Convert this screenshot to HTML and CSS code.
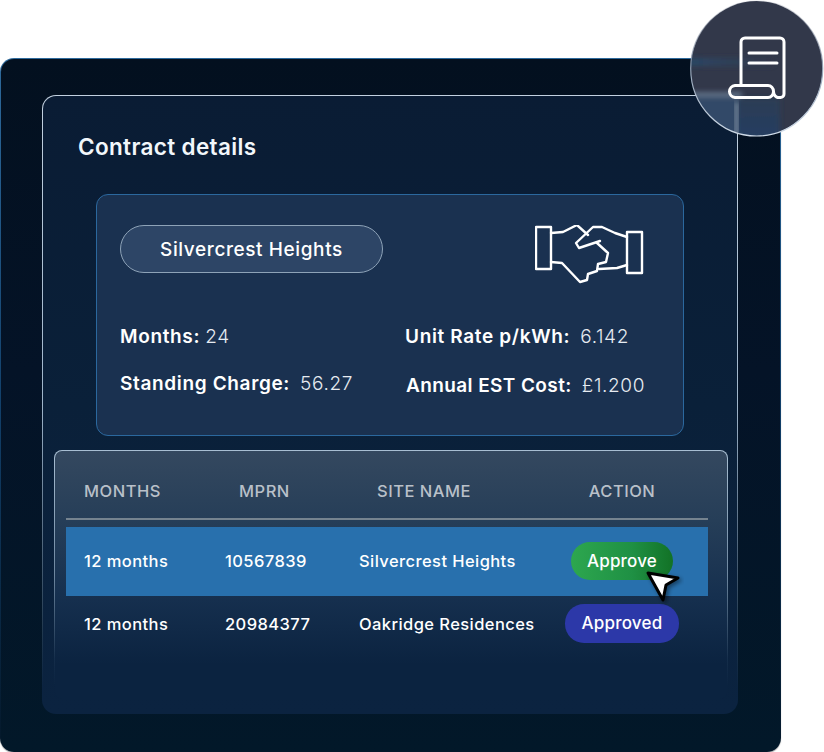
FILE: index.html
```html
<!DOCTYPE html>
<html lang="en">
<head>
<meta charset="utf-8">
<title>Contract details</title>
<link rel="stylesheet" href="styles.css">
</head>
<body>
<main class="shell">
  <section class="panel">
    <h1 class="title">Contract details</h1>
    <div class="summary">
      <div class="summary-top">
        <div class="site-pill">Silvercrest Heights</div>
        <svg class="handshake" viewBox="0 0 110 60" width="110" height="60" fill="none" stroke="#fff" stroke-width="2.4" stroke-linejoin="round" stroke-linecap="round">
          <rect x="1" y="2" width="15" height="42"/>
          <rect x="92" y="7" width="15" height="41"/>
          <path d="M16 8 L28 7 L42 0 L53 10"/>
          <path d="M92 12 L80 8 L67 2 L58 2 L41 18 L44 23 L65 16"/>
          <path d="M62 18 L73 28 L71 37 L63 39 L62 46 L53 49 L52 55 L45 57 L27 38 L16 37"/>
          <path d="M64 44 L82 43 L92 40"/>
        </svg>
      </div>
      <div class="facts">
        <p class="fact"><b>Months:</b> <span>24</span></p>
        <p class="fact fact-right"><b>Unit Rate p/kWh:</b> <span>6.142</span></p>
        <p class="fact fact-raised"><b>Standing Charge:</b> <span>56.27</span></p>
        <p class="fact fact-right fact-annual"><b>Annual EST Cost:</b> <span>£1.200</span></p>
      </div>
    </div>
    <div class="table-card">
      <div class="row head">
        <div>MONTHS</div>
        <div class="head-mprn">MPRN</div>
        <div class="head-site">SITE NAME</div>
        <div class="cell-action">ACTION</div>
      </div>
      <div class="row data selected">
        <div>12 months</div>
        <div>10567839</div>
        <div>Silvercrest Heights</div>
        <div class="cell-action"><span class="btn btn-approve">Approve</span></div>
      </div>
      <div class="row data">
        <div>12 months</div>
        <div>20984377</div>
        <div>Oakridge Residences</div>
        <div class="cell-action"><span class="btn btn-approved">Approved</span></div>
      </div>
    </div>
  </section>
  <svg class="cursor" viewBox="0 0 40 36" width="40" height="36">
    <defs><filter id="cs" x="-30%" y="-30%" width="160%" height="160%"><feDropShadow dx="2" dy="2" stdDeviation="2" flood-color="#000" flood-opacity=".45"/></filter></defs>
    <path d="M4 3 L34 8 L22 15 L19 30 Z" fill="#fff" stroke="#000" stroke-width="3" stroke-linejoin="round" filter="url(#cs)"/>
  </svg>
  <svg class="badge" viewBox="0 0 134 138" width="134" height="138" fill="none">
    <defs>
      <clipPath id="disc"><ellipse cx="66.700" cy="68.500" rx="66" ry="67.500"/></clipPath>
      <filter id="soft" x="-30%" y="-30%" width="160%" height="160%"><feGaussianBlur stdDeviation="2.5"/></filter>
      <linearGradient id="ring" x1="0" y1="0" x2="0" y2="1">
        <stop offset="0" stop-color="#6f7688" stop-opacity=".2"/>
        <stop offset=".55" stop-color="#9aa9bc"/>
        <stop offset="1" stop-color="#cfdbe8"/>
      </linearGradient>
      <linearGradient id="band" x1="0" y1="0" x2="1" y2="0">
        <stop offset="0" stop-color="#2b4867"/>
        <stop offset="1" stop-color="#32384a"/>
      </linearGradient>
      <linearGradient id="low" x1="0" y1="0" x2="0" y2="1">
        <stop offset="0" stop-color="#2b3c55"/>
        <stop offset="1" stop-color="#253f62"/>
      </linearGradient>
    </defs>
    <g clip-path="url(#disc)">
      <rect width="134" height="138" fill="#32384a"/>
      <g filter="url(#soft)">
        <rect x="-6" y="58" width="90" height="8" fill="url(#band)"/>
        <rect x="-6" y="96" width="54" height="46" fill="#304868"/>
        <rect x="48" y="98" width="42" height="44" fill="url(#low)"/>
        <rect x="-6" y="92" width="58" height="5" fill="#5f7086"/>
      </g>
      <rect x="45.500" y="102" width="2.500" height="36" fill="#a2afbd" filter="url(#soft)"/>
    </g>
    <ellipse cx="66.700" cy="68.500" rx="66" ry="67.500" stroke="url(#ring)" stroke-width="1.200"/>
    <g stroke="#fff" stroke-width="3" stroke-linecap="round" stroke-linejoin="round">
      <path d="M51 85 V42 a4 4 0 0 1 4-4 H90 a4 4 0 0 1 4 4 V94 a3.500 3.500 0 0 1-3.500 3.500 H88"/>
      <path d="M88.500 97.500 a5 6 0 0 1-5-6 a5.500 6 0 0 0-5.500-6 H45 a6 6 0 0 0-5.500 6 a6 6 0 0 0 5.500 6 H78 a5.500 6 0 0 0 5.500-6"/>
      <path d="M59 53 H87 M59 63 H87"/>
    </g>
  </svg>
</main>
</body>
</html>
```
FILE: styles.css
```css
* { box-sizing: border-box; }
html, body { margin: 0; padding: 0; background: #fff; }
body { width: 824px; height: 752px; overflow: hidden; font-family: Inter, "Liberation Sans", sans-serif; color: #fff; }
.shell {
  position: relative;
  width: 824px;
  height: 752px;
  padding: 58px 44px 0 0;
}
.shell > .panel { margin-left: 42px; }
.shell::before {
  content: "";
  position: absolute;
  left: 0;
  top: 58px;
  width: 779px;
  height: 692px;
  border-radius: 14px;
  border: 1px solid transparent;
  background:
    linear-gradient(180deg, #03101f 0%, #041327 45%, #021829 100%) padding-box,
    linear-gradient(180deg, #2e6a9c 0%, #12406a 50%, #04182a 100%) border-box;
  box-shadow: 0 1px 1px rgba(0, 0, 0, .35);
}
.panel {
  position: relative;
  width: 696px;
  height: 619px;
  margin-top: 37px;
  border: 1px solid transparent;
  border-radius: 14px;
  background:
    linear-gradient(180deg, #0a1c34 0%, #0a2039 50%, #0b2340 100%) padding-box,
    linear-gradient(180deg, #c3d1e0 0%, #9fb5ca 50%, rgba(110,140,170,.3) 86%, #0b2340 96%) border-box;
  display: flex;
  flex-direction: column;
  padding: 37px 0 0 0;
}
.title {
  margin: 0 0 0 35px;
  font-size: 22.5px;
  line-height: 28px;
  font-weight: 600;
  letter-spacing: .35px;
  color: #f2f7fb;
}
.summary {
  width: 588px;
  height: 242px;
  margin: 33px 0 0 53px;
  padding: 30px 40px 0 23px;
  border: 1px solid #2b689e;
  border-radius: 12px;
  background: #1a3150;
}
.summary-top {
  display: flex;
  justify-content: space-between;
  align-items: flex-start;
}
.site-pill {
  width: 263px;
  height: 48px;
  border-radius: 24px;
  border: 1px solid #8ea3b8;
  background: #2d4566;
  display: flex;
  align-items: center;
  justify-content: center;
  font-size: 19px;
  font-weight: 500;
  letter-spacing: .6px;
}
.handshake { margin-top: 0; margin-right: -2px; }
.facts {
  display: grid;
  grid-template-columns: 285px 1fr;
  grid-auto-rows: 49px;
  margin-top: 38px;
}
.fact {
  margin: 0;
  font-size: 19px;
  line-height: 28px;
  white-space: nowrap;
  display: flex;
  gap: 5px;
}
.fact b { font-weight: 600; letter-spacing: .65px; }
.fact span { font-weight: 300; color: #e6ebf1; letter-spacing: .65px; }
.fact-right { gap: 10px; }
.fact-raised { gap: 10px; margin-top: -2px; }
.fact-annual { padding-left: 1px; }
.fact-annual b { letter-spacing: .4px; }
.table-card {
  width: 674px;
  height: 250px;
  margin: 14px 0 0 11px;
  padding: 0 11px;
  border: 1px solid transparent;
  border-radius: 8px;
  background:
    linear-gradient(180deg, #34485f 0%, #263e58 28%, #16304f 58%, #0b2340 86%) padding-box,
    linear-gradient(180deg, #a8bed2 0%, #6e879f 50%, rgba(60,90,120,.2) 84%, rgba(11,35,64,0) 95%) border-box;
}
.row {
  display: grid;
  grid-template-columns: 141px 134px 177px 172px;
  padding-left: 18px;
  width: 642px;
  align-items: center;
}
.head {
  height: 69px;
  padding-top: 13px;
  border-bottom: 2px solid #75838f;
  font-size: 16.500px;
  font-weight: 500;
  color: #b9c0c9;
  letter-spacing: .5px;
}
.head-mprn { padding-left: 14px; }
.head-site { padding-left: 18px; }
.data {
  font-size: 16.500px;
  font-weight: 500;
  letter-spacing: .42px;
}
.selected { height: 69px; margin-top: 7px; padding-bottom: 1px; background: #2870ad; }
.selected + .data { height: 56px; }
.cell-action { text-align: center; }
.btn {
  display: inline-flex;
  align-items: center;
  justify-content: center;
  border-radius: 19px;
  height: 38px;
  font-size: 17px;
  font-weight: 500;
  letter-spacing: .2px;
  color: #fff;
}
.btn-approve { width: 102px; background: linear-gradient(90deg, #2da74f 0%, #1f9044 60%, #127226 100%); margin-top: -1px; }
.btn-approved { width: 114px; height: 39px; background: #2c38a8; margin-top: -2px; }
.cursor { position: absolute; left: 644px; top: 570px; }
.badge { position: absolute; left: 690px; top: 0; }
```
